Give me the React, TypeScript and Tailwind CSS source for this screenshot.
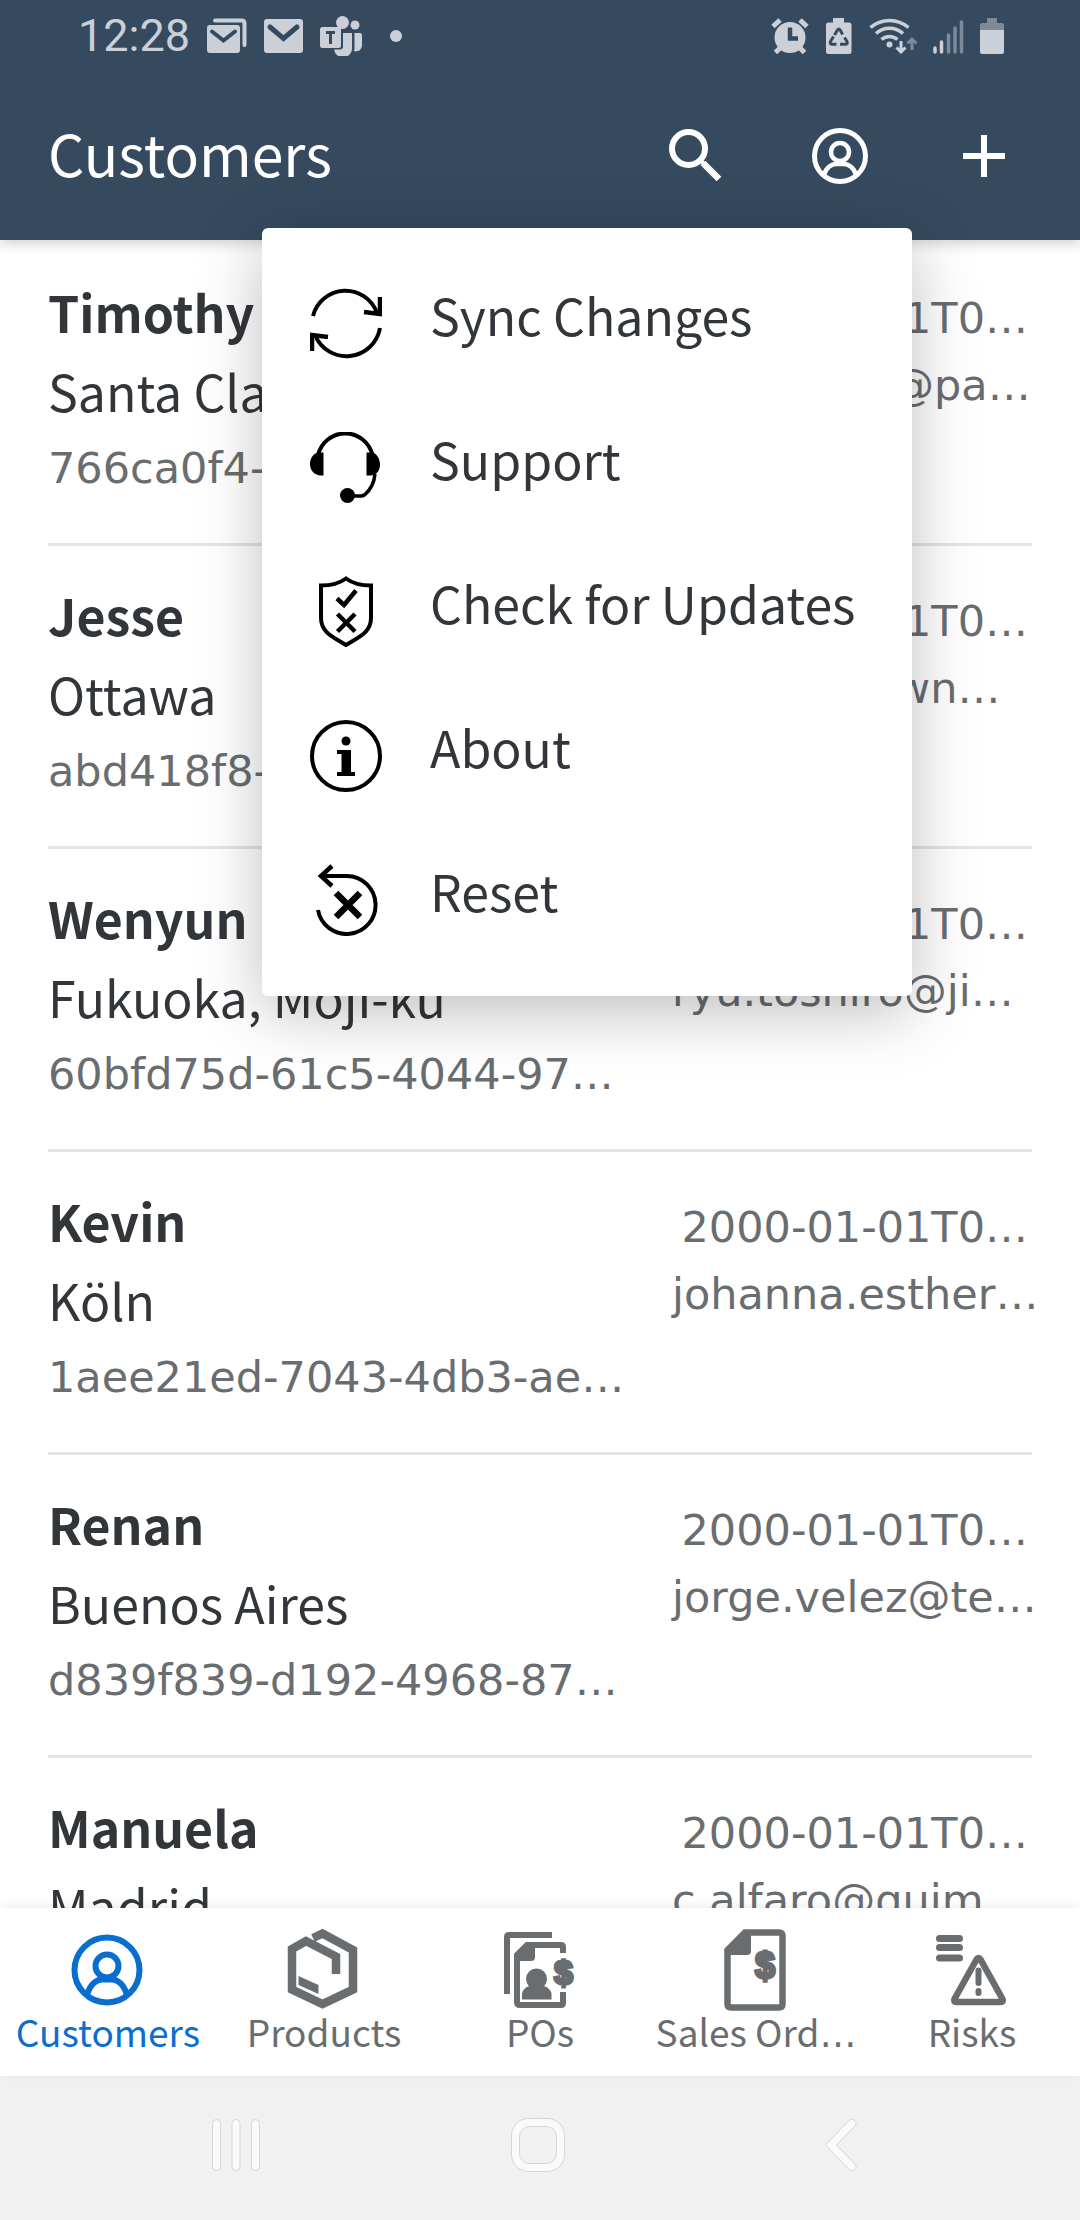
import type { ReactNode } from "react";

const uiFont = "font-['Noto_Sans_CJK_SC','Noto_Sans',sans-serif]";
const wideFont = "font-['DejaVu_Sans',sans-serif]";

type Customer = { name: string; city: string; id: string; date: string; email: string };

const customers: Customer[] = [
  { name: "Timothy", city: "Santa Clara", id: "766ca0f4-2f1b-4c87-a1…", date: "2000-01-01T0…", email: "timothy.br@pa…" },
  { name: "Jesse", city: "Ottawa", id: "abd418f8-90c3-4e15-b2…", date: "2000-01-01T0…", email: "jesse@brown…" },
  { name: "Wenyun", city: "Fukuoka, Moji-ku", id: "60bfd75d-61c5-4044-97…", date: "2000-01-01T0…", email: "ryu.toshiro@ji…" },
  { name: "Kevin", city: "Köln", id: "1aee21ed-7043-4db3-ae…", date: "2000-01-01T0…", email: "johanna.esther…" },
  { name: "Renan", city: "Buenos Aires", id: "d839f839-d192-4968-87…", date: "2000-01-01T0…", email: "jorge.velez@te…" },
  { name: "Manuela", city: "Madrid", id: "5c0e7a12-3b64-4d08-9f…", date: "2000-01-01T0…", email: "c.alfaro@quim…" },
];

function Icon({ size, children }: { size: 72 | 84; children: ReactNode }) {
  return (
    <svg
      width={size}
      height={size}
      viewBox={`0 0 ${size} ${size}`}
      fill="none"
      stroke="currentColor"
      className="shrink-0"
      aria-hidden="true"
    >
      {children}
    </svg>
  );
}

function StatusBar() {
  return (
    <div className="flex h-[72px] items-center justify-between pr-[76px] pl-[78px] text-[#cbd0d8]">
      <div className="flex items-center gap-4">
        <span className="font-['Roboto',sans-serif] text-[45px] leading-[72px]">12:28</span>
        <svg width="42" height="36" viewBox="0 0 42 36" fill="none" aria-hidden="true">
          <path d="M9 2.5h26.5q3 0 3 3v21.500" stroke="currentColor" strokeWidth="4" strokeLinecap="round" />
          <rect x="1" y="7" width="33" height="28" rx="3" fill="currentColor" />
          <path d="M6 13.500l11.500 9 11.500-9" stroke="#354a5f" strokeWidth="4" strokeLinecap="round" />
        </svg>
        <svg width="40" height="36" viewBox="0 0 40 36" fill="none" aria-hidden="true">
          <rect x="0" y="1" width="39" height="34" rx="3" fill="currentColor" />
          <path d="M6 9l13.500 11.500L33 9" stroke="#354a5f" strokeWidth="5" strokeLinecap="round" />
        </svg>
        <svg width="42" height="40" viewBox="0 0 42 40" fill="currentColor" aria-hidden="true">
          <circle cx="22.500" cy="6.500" r="6.500" />
          <circle cx="35" cy="9" r="4.500" />
          <path d="M23 17h9v14a9 9 0 0 1-18 2.500h7a3 3 0 0 0 2-3z" />
          <path d="M34.500 17H40a2 2 0 0 1 2 2v10a6 6 0 0 1-8 6q.8-2 .5-5z" />
          <rect x="0" y="11" width="21" height="21" rx="2.500" />
          <path d="M6 16.500h9M10.500 16.500V28" stroke="#354a5f" strokeWidth="3" fill="none" />
        </svg>
        <span className="ml-3 size-3 rounded-full bg-current" />
      </div>
      <div className="flex items-center gap-4">
        <svg width="38" height="36" viewBox="0 0 38 36" fill="none" aria-hidden="true">
          <circle cx="19" cy="19.500" r="15.500" fill="currentColor" />
          <path d="M2 8.500L9 2M36 8.500L29 2" stroke="currentColor" strokeWidth="5" />
          <path d="M9 30l-4.500 4.500M29 30l4.500 4.500" stroke="currentColor" strokeWidth="5" />
          <path d="M19 9.500v11h8" stroke="#354a5f" strokeWidth="4.500" />
        </svg>
        <svg width="28" height="36" viewBox="0 0 28 36" fill="none" aria-hidden="true">
          <path d="M8 0h11v4.500h5q2.500 0 2.500 2.500v26.500q0 2.500-2.500 2.500H3.500Q1 36 1 33.500V7q0-2.500 2.500-2.500H8z" fill="currentColor" />
          <path d="M9.500 17l3-5q1.300-2 2.600 0l2.600 4.500M19.500 19.500l2.500 4q1 2.500-1.500 2.800H15M11.500 26.300H7q-2.500-.3-1.500-2.800l3-5" stroke="#354a5f" strokeWidth="3" />
        </svg>
        <svg width="48" height="36" viewBox="0 0 48 36" fill="none" aria-hidden="true">
          <path d="M1.500 9.500a29 29 0 0 1 38 0M7 15.500a20 20 0 0 1 27 0M12.500 21.500a12 12 0 0 1 16 0" stroke="currentColor" strokeWidth="3.500" />
          <circle cx="20.500" cy="26.500" r="3" fill="currentColor" />
          <path d="M32 23v11M27.500 29.500l4.500 4.500 4.500-4.500" stroke="currentColor" strokeWidth="3" />
          <path d="M43 32V21M38.500 25.500L43 21l4.500 4.500" stroke="#7d8a99" strokeWidth="3" />
        </svg>
        <svg width="31" height="36" viewBox="0 0 31 36" fill="none" strokeWidth="3.500" strokeLinecap="round" aria-hidden="true">
          <path d="M2 30v4M8.500 24v10" stroke="currentColor" />
          <path d="M15.500 17v17M22 10v24M28.500 4v30" stroke="#7d8a99" />
        </svg>
        <svg width="24" height="36" viewBox="0 0 24 36" aria-hidden="true">
          <path d="M7 0h10v5h5q2 0 2 2v5H0V7q0-2 2-2h5z" fill="#7d8a99" />
          <path d="M0 12h24v22q0 2-2 2H2q-2 0-2-2z" fill="currentColor" />
        </svg>
      </div>
    </div>
  );
}

function HeaderButton({ label, children }: { label: string; children: ReactNode }) {
  return (
    <button type="button" aria-label={label} className="flex h-full w-36 items-center justify-center">
      <Icon size={72}>{children}</Icon>
    </button>
  );
}

function Header() {
  return (
    <header className="relative shrink-0 bg-[#354a5f] text-white shadow-[0_4px_12px_rgba(0,0,0,0.18)]">
      <StatusBar />
      <div className="flex h-[168px] items-center justify-between pr-6 pl-12">
        <h1 className="pb-2 text-[57px] leading-[72px]">Customers</h1>
        <div className="flex h-full">
          <HeaderButton label="Search">
            <circle cx="28.500" cy="28.500" r="16.500" strokeWidth="6" />
            <path d="M43 43l16 16" strokeWidth="6.500" />
            <path d="M39 39l6 6" strokeWidth="4" />
          </HeaderButton>
          <HeaderButton label="User menu">
            <circle cx="36" cy="36" r="25.500" strokeWidth="5" />
            <circle cx="36" cy="32" r="9" strokeWidth="4.500" />
            <path d="M20 55C22 47 28 44 32 44h8c4 0 10 3 12 11" strokeWidth="4.500" />
          </HeaderButton>
          <HeaderButton label="Add customer">
            <path d="M36 15v42M15 36h42" strokeWidth="6" />
          </HeaderButton>
        </div>
      </div>
    </header>
  );
}

function CustomerRow({ name, city, id, date, email }: Customer) {
  return (
    <li className="flex justify-between border-b-3 border-[#e4e4e4] pt-7 pb-9 whitespace-nowrap">
      <div>
        <h2 className="text-[50px] leading-[80px] font-bold text-[#32363a]">{name}</h2>
        <p className="text-[50px] leading-[78px] text-[#32363a]">{city}</p>
        <p className={`${wideFont} text-[43px] leading-[78px] text-[#6a6d70]`}>{id}</p>
      </div>
      <div className={`${wideFont} w-[360px] pt-3.5 text-[43px] leading-[67px] text-[#6a6d70]`}>
        <p className="pr-1 text-right">{date}</p>
        <p>{email}</p>
      </div>
    </li>
  );
}

const menuItems: { label: string; icon: ReactNode }[] = [
  {
    label: "Sync Changes",
    icon: (
      <g strokeWidth="4">
        <path d="M3 28A33.500 33.500 0 0 1 67 25" />
        <path d="M70 9v17l-16-2" strokeWidth="4.500" />
        <path d="M70 40A34 34 0 0 1 5 47" />
        <path d="M2 63V47l16 2" strokeWidth="4.500" />
      </g>
    ),
  },
  {
    label: "Support",
    icon: (
      <>
        <path d="M8 23a28 28 0 0 1 54.500 0" strokeWidth="4" />
        <path d="M13.500 20.500v23H10C4 43 0 38 0 32s4-11 8-11.500zM56.500 20.500v23H61c6-1 9-5 9-11s-4-12-8-12z" fill="currentColor" stroke="none" />
        <path d="M65 42c-1 10-6 17-10 20.500q-2 1.500-4 1.500H40" strokeWidth="3.500" />
        <circle cx="37.500" cy="63.500" r="7.500" fill="currentColor" stroke="none" />
      </>
    ),
  },
  {
    label: "Check for Updates",
    icon: (
      <>
        <path d="M36 2.500C30 7 20 9.500 11 9.500V42c0 14 11 18.500 25 27 14-8.500 25-13 25-27V9.500C52 9.500 42 7 36 2.500z" strokeWidth="4" />
        <path d="M27 22.500l7 6.500 12-14.500M27.500 38l17.500 17.500M45 38L27.500 55.500" strokeWidth="4.500" />
      </>
    ),
  },
  {
    label: "About",
    icon: (
      <>
        <circle cx="36" cy="36" r="34" strokeWidth="4" />
        <circle cx="36" cy="21" r="4.500" fill="currentColor" stroke="none" />
        <path d="M27 30h14v22h4v4H27v-4h4.500V34H27z" fill="currentColor" stroke="none" />
      </>
    ),
  },
  {
    label: "Reset",
    icon: (
      <>
        <path d="M11 12h26a29 29 0 1 1-29 34" strokeWidth="4" />
        <path d="M22 2L11 12l11 10" strokeWidth="4.500" />
        <path d="M26 29l24 24M50 29L26 53" strokeWidth="6.500" />
      </>
    ),
  },
];

function UserMenu() {
  return (
    <div
      role="menu"
      className="absolute top-[228px] right-[168px] flex min-w-[650px] flex-col rounded-md bg-white py-6 shadow-[0_16px_64px_rgba(0,0,0,0.26)]"
    >
      {menuItems.map((item) => (
        <button
          key={item.label}
          type="button"
          role="menuitem"
          className="flex h-36 items-center gap-12 px-12 text-left text-[50px] whitespace-nowrap text-[#32363a]"
        >
          <span className="text-black">
            <Icon size={72}>{item.icon}</Icon>
          </span>
          <span className="pb-5 leading-[72px]">{item.label}</span>
        </button>
      ))}
    </div>
  );
}

function Dollar({ x, y, size }: { x: number; y: number; size: number }) {
  return (
    <text
      x={x}
      y={y}
      fontSize={size}
      fontWeight="bold"
      textAnchor="middle"
      fill="currentColor"
      strokeWidth="3"
      fontFamily="Liberation Sans, sans-serif"
    >
      $
    </text>
  );
}

const tabs: { label: string; clipped?: boolean; active?: boolean; icon: ReactNode }[] = [
  {
    label: "Customers",
    active: true,
    icon: (
      <>
        <circle cx="41" cy="42" r="32.500" strokeWidth="6" />
        <circle cx="41" cy="38" r="11.500" strokeWidth="6" />
        <path d="M21.500 66C24 56 31 51.500 36 51.500h10c5 0 12 4.500 14.500 14.500" strokeWidth="6" />
      </>
    ),
  },
  {
    label: "Products",
    icon: (
      <>
        <path d="M31 10l9.500-4.500L71 22v39.500L40.500 76 10 61.500V21l14-8 30 15.500V46" strokeWidth="8.500" />
        <path d="M16.500 48l20 9v9l-20-9z" fill="currentColor" stroke="none" />
      </>
    ),
  },
  {
    label: "POs",
    icon: (
      <>
        <path d="M9 66V9q0-2 2-2h43" strokeWidth="6" />
        <path d="M65 25V19q0-2-2-2H29L19 27v47q0 3 3 3h41q2 0 2-2V64" strokeWidth="6" />
        <path d="M17 28L30 15h7v14q0 4-4 4H17z" fill="currentColor" stroke="none" />
        <circle cx="38.500" cy="51" r="10.500" fill="currentColor" stroke="none" />
        <path d="M24 71.500v-5q0-6 8-9h13q8.500 3 8.500 9v5z" fill="currentColor" stroke="none" />
        <Dollar x={65.5} y={56} size={34} />
      </>
    ),
  },
  {
    label: "Sales Ord",
    clipped: true,
    icon: (
      <>
        <path d="M13.500 22v54q0 3.500 3.500 3.500h48q3.500 0 3.500-3.500V8q0-3.500-3.500-3.500H31z" strokeWidth="6.500" />
        <path d="M11 21L30 2h7v21q0 4-4 4H11z" fill="currentColor" stroke="none" />
        <Dollar x={51} y={50} size={36} />
      </>
    ),
  },
  {
    label: "Risks",
    icon: (
      <>
        <path d="M9.500 10.500h20M9.500 19.500h20M9.500 30h20" strokeWidth="7" strokeLinecap="round" />
        <path d="M46.500 31.500L24.500 71q-1.500 3 2 3h44q3.500 0 2-3l-22-39.500q-2-3-4 0z" strokeWidth="6.500" />
        <path d="M48.500 42.500v12.500M48.500 63v2" strokeWidth="6" strokeLinecap="round" />
      </>
    ),
  },
];

function TabBar() {
  return (
    <nav className="relative grid h-[168px] shrink-0 grid-cols-5 bg-white shadow-[0_-2px_10px_rgba(0,0,0,0.08)]">
      {tabs.map((tab) => (
        <button
          key={tab.label}
          type="button"
          aria-current={tab.active ? "page" : undefined}
          className={`flex flex-col items-center pt-5 text-[37px] leading-[38px] whitespace-nowrap ${
            tab.active ? "text-[#0a6ed1]" : "text-[#6a6d70]"
          }`}
        >
          <Icon size={84}>{tab.icon}</Icon>
          <span>
            {tab.label}
            {tab.clipped && <span className={wideFont}>…</span>}
          </span>
        </button>
      ))}
    </nav>
  );
}

function SystemNav() {
  return (
    <div className="grid h-36 shrink-0 grid-cols-3 items-center justify-items-center bg-[#f1f1f1] px-[84px]">
      <button type="button" aria-label="Recent apps">
        <svg width="60" height="60" viewBox="0 0 60 60" fill="#fafafa" stroke="#d6d6d6">
          <rect x="6.500" y="1.500" width="8" height="51" rx="4" />
          <rect x="26" y="1.500" width="8" height="51" rx="4" />
          <rect x="45.500" y="1.500" width="8" height="51" rx="4" />
        </svg>
      </button>
      <button type="button" aria-label="Home">
        <svg width="60" height="60" viewBox="0 0 60 60" fill="#fafafa" stroke="#d6d6d6">
          <rect x="1.500" y=".5" width="53" height="53" rx="17" />
          <rect x="9.500" y="8.500" width="37" height="37" rx="10" fill="#f1f1f1" />
        </svg>
      </button>
      <button type="button" aria-label="Back">
        <svg width="60" height="60" viewBox="0 0 60 60" fill="#fafafa" stroke="#d6d6d6" strokeLinejoin="round">
          <path d="M11.500 27L35 2.500a3.800 3.800 0 0 1 6 5.500L22.500 27 41 46a3.800 3.800 0 0 1-6 5.500z" />
        </svg>
      </button>
    </div>
  );
}

export default function App() {
  return (
    <div className={`relative flex h-screen flex-col overflow-hidden bg-white ${uiFont}`}>
      <Header />
      <main className="min-h-0 flex-1 overflow-hidden">
        <ul className="px-12 pt-[3px]">
          {customers.map((customer) => (
            <CustomerRow key={customer.name} {...customer} />
          ))}
        </ul>
      </main>
      <TabBar />
      <SystemNav />
      <UserMenu />
    </div>
  );
}
